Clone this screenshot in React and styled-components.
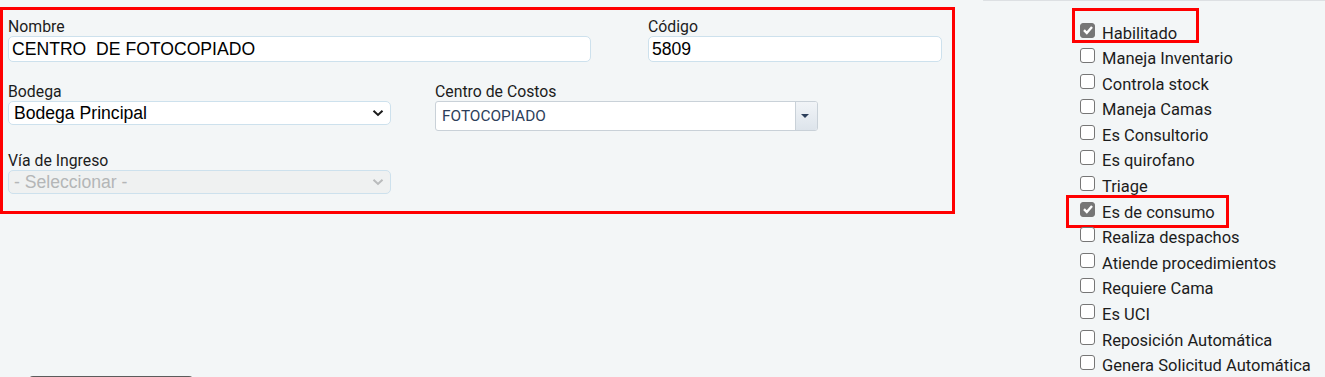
import React from 'react';
import styled, { createGlobalStyle } from 'styled-components';

const GlobalStyle = createGlobalStyle`
  html, body {
    margin: 0;
    padding: 0;
    background: #f3f6f7;
  }
  body {
    font-family: Roboto, "Liberation Sans", sans-serif;
    color: #212121;
    overflow: hidden;
  }
`;

const Page = styled.div`
  display: flex;
  width: 1325px;
  height: 377px;
  overflow: hidden;
`;

const LeftColumn = styled.div`
  width: 955px;
  flex-shrink: 0;
  padding-top: 7px;
  display: flex;
  flex-direction: column;
  align-items: flex-start;
`;

const FormBox = styled.div`
  box-sizing: border-box;
  flex-shrink: 0;
  width: 955px;
  height: 207px;
  border: 3px solid #ff0000;
  padding: 7px 0 0 5px;
  display: flex;
  flex-direction: column;
  gap: 20px;
`;

const FormRow = styled.div`
  display: flex;
  align-items: flex-start;
  gap: ${(p) => p.$gap || 0}px;
`;

const Field = styled.div`
  width: ${(p) => p.$width}px;
  display: flex;
  flex-direction: column;
`;

const Label = styled.label`
  font-size: 15.8px;
  line-height: 18px;
  padding-top: 1px;
  color: #1c1c1c;
  white-space: nowrap;
`;

const TextInput = styled.input`
  box-sizing: border-box;
  width: 100%;
  height: 26px;
  border: 1px solid #cde1ed;
  border-radius: 5px;
  background: #ffffff;
  font-family: "Liberation Sans", Arial, sans-serif;
  font-size: 17.6px;
  color: #000;
  padding: 0 3px;
  outline: none;
  white-space: pre;
`;

const SelectBox = styled.div`
  box-sizing: border-box;
  width: 100%;
  height: 24px;
  border: 1px solid #cde1ed;
  border-radius: 5px;
  background: ${(p) => (p.$disabled ? '#eff1f1' : '#ffffff')};
  color: ${(p) => (p.$disabled ? '#b4b6b7' : '#000')};
  font-family: "Liberation Sans", Arial, sans-serif;
  font-size: 17.6px;
  display: flex;
  align-items: center;
  justify-content: space-between;
  padding: 0 6px 0 5px;
  white-space: nowrap;
`;

const Chevron = styled.svg`
  width: 12px;
  height: 8px;
  flex-shrink: 0;
`;

const ComboBox = styled.div`
  box-sizing: border-box;
  width: 100%;
  height: 30px;
  border: 1px solid #c9d1d8;
  border-radius: 3px;
  background: #ffffff;
  display: flex;
  align-items: stretch;
  overflow: hidden;
`;

const ComboText = styled.div`
  flex: 1;
  display: flex;
  align-items: center;
  padding-left: 6px;
  font-size: 15.4px;
  color: #2c3e5a;
`;

const ComboButton = styled.div`
  width: 22px;
  border-left: 1px solid #c9d1d8;
  background: linear-gradient(#f1f4f7, #dde4eb);
  display: flex;
  align-items: center;
  justify-content: center;
  padding-right: 4px;
  box-sizing: border-box;

  &::after {
    content: '';
    border-left: 4px solid transparent;
    border-right: 4px solid transparent;
    border-top: 4px solid #2c3e5a;
  }
`;

const DarkButton = styled.div`
  margin-top: 162px;
  margin-left: 29px;
  width: 164px;
  height: 30px;
  border-radius: 4px;
  background: #5c5c5c;
  flex-shrink: 0;
`;

const RightColumn = styled.div`
  flex: 1;
  display: flex;
  flex-direction: column;
`;

const PanelStub = styled.div`
  margin-left: 28px;
  height: 1px;
  background: #f7f8f9;
  border-bottom: 1px solid #dde0e3;
  border-left: 1px solid #dde0e3;
  border-bottom-left-radius: 5px;
`;

const CheckList = styled.div`
  margin-top: 19.5px;
  padding-left: 125px;
  display: flex;
  flex-direction: column;
`;

const CheckRow = styled.div`
  position: relative;
  display: flex;
  align-items: flex-start;
  height: 25.6px;
  line-height: 25.6px;
  font-size: 16.5px;
  color: #1c1c1c;
  white-space: nowrap;
`;

const Box = styled.span`
  box-sizing: border-box;
  width: 15px;
  height: 15px;
  margin-top: 2px;
  margin-right: 7px;
  border: 1px solid #767676;
  border-radius: 3px;
  background: ${(p) => (p.$checked ? '#767676' : '#ffffff')};
  display: flex;
  align-items: center;
  justify-content: center;
  flex-shrink: 0;
`;

const Highlight = styled.span`
  position: absolute;
  box-sizing: border-box;
  border: 3px solid #ff0000;
  top: ${(p) => p.$top}px;
  left: ${(p) => p.$left}px;
  width: ${(p) => p.$width}px;
  height: ${(p) => p.$height}px;
  pointer-events: none;
`;

const options = [
  { label: 'Habilitado', checked: true, mark: { top: -12.5, left: -8, width: 127, height: 35 } },
  { label: 'Maneja Inventario' },
  { label: 'Controla stock' },
  { label: 'Maneja Camas' },
  { label: 'Es Consultorio' },
  { label: 'Es quirofano' },
  { label: 'Triage' },
  { label: 'Es de consumo', checked: true, mark: { top: -5, left: -14, width: 163, height: 33 } },
  { label: 'Realiza despachos' },
  { label: 'Atiende procedimientos' },
  { label: 'Requiere Cama' },
  { label: 'Es UCI' },
  { label: 'Reposición Automática' },
  { label: 'Genera Solicitud Automática' },
];

const ChevronIcon = ({ color }) => (
  <Chevron viewBox="0 0 12 8">
    <path d="M1.5 1.8 L6 6 L10.5 1.8" fill="none" stroke={color} strokeWidth="2" />
  </Chevron>
);

const App = () => {
  return (
    <Page>
      <GlobalStyle />
      <LeftColumn>
        <FormBox>
          <FormRow $gap={57}>
            <Field $width={583}>
              <Label>Nombre</Label>
              <TextInput readOnly value="CENTRO  DE FOTOCOPIADO" />
            </Field>
            <Field $width={294}>
              <Label>Código</Label>
              <TextInput readOnly value="5809" />
            </Field>
          </FormRow>
          <FormRow $gap={44}>
            <Field $width={383}>
              <Label>Bodega</Label>
              <SelectBox>
                Bodega Principal
                <ChevronIcon color="#1a1a1a" />
              </SelectBox>
            </Field>
            <Field $width={383}>
              <Label>Centro de Costos</Label>
              <ComboBox>
                <ComboText>FOTOCOPIADO</ComboText>
                <ComboButton />
              </ComboBox>
            </Field>
          </FormRow>
          <FormRow>
            <Field $width={383}>
              <Label>Vía de Ingreso</Label>
              <SelectBox $disabled>
                - Seleccionar -
                <ChevronIcon color="#b9bbbc" />
              </SelectBox>
            </Field>
          </FormRow>
        </FormBox>
        <DarkButton />
      </LeftColumn>
      <RightColumn>
        <PanelStub />
        <CheckList>
          {options.map((opt) => (
            <CheckRow key={opt.label}>
              <Box $checked={opt.checked}>
                {opt.checked && (
                  <svg width="12" height="12" viewBox="0 0 12 12">
                    <path d="M2 6.2 L4.8 9 L10 3" fill="none" stroke="#fff" strokeWidth="2.4" />
                  </svg>
                )}
              </Box>
              {opt.label}
              {opt.mark && (
                <Highlight
                  $top={opt.mark.top}
                  $left={opt.mark.left}
                  $width={opt.mark.width}
                  $height={opt.mark.height}
                />
              )}
            </CheckRow>
          ))}
        </CheckList>
      </RightColumn>
    </Page>
  );
};

export default App;
